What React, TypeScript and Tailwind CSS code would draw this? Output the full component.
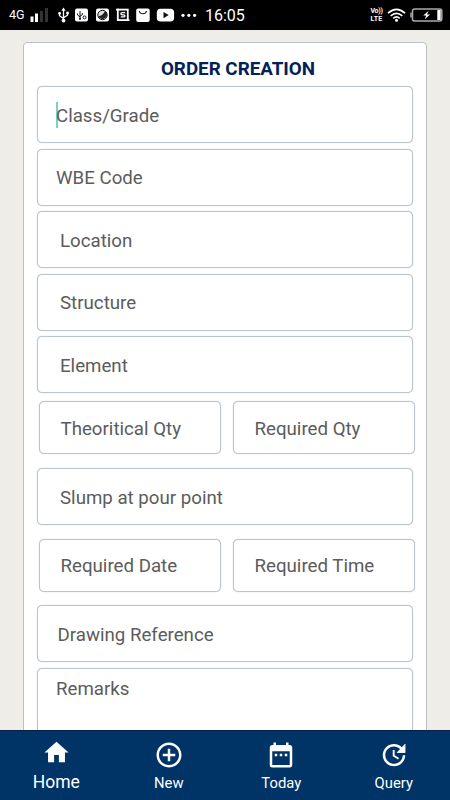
import type { ReactNode } from "react";
import clsx from "clsx";
import { MdControlPoint, MdDateRange, MdHome } from "react-icons/md";

interface FieldProps {
  label: string;
  className?: string;
  focused?: boolean;
}

function Field({ label, className, focused }: FieldProps) {
  return (
    <div
      className={clsx(
        "flex items-center rounded-[5px] border-[1.5px] border-[#bcc4cc] bg-white text-[18.7px] text-[#5c5c5c] shadow-[0_0_1px_#b5bdc6]",
        className,
      )}
    >
      {focused && <span className="-mr-[2px] h-[26px] w-[2px] bg-[#7fcfc0]" />}
      <span className="pt-[3px] whitespace-nowrap">{label}</span>
    </div>
  );
}

function SignalIcon() {
  return (
    <svg className="ml-[3px] h-[14px] w-[19px]" viewBox="0 0 19 14">
      <rect x="0.5" y="8.5" width="3" height="5.5" fill="#fff" />
      <rect x="5" y="5.5" width="3" height="8.5" fill="#fff" />
      <rect x="10" y="3" width="3" height="11" fill="#333" />
      <rect x="15" y="0" width="3" height="14" fill="#333" />
    </svg>
  );
}

function StatusIcons() {
  return (
    <svg className="ml-[9px] h-[16px] w-[141px]" viewBox="0 0 141 16">
      {/* usb */}
      <g stroke="#fff" strokeWidth="1.3" fill="none">
        <path d="M5.5 2v11M1.5 6.5v2.2l4 2.8M9.5 5.5v2.7l-4 2.5" />
      </g>
      <path d="M5.5 0.5l2 3.2h-4z" fill="#fff" />
      <circle cx="5.5" cy="13.6" r="1.9" fill="#fff" />
      <circle cx="1.6" cy="6.3" r="1.4" fill="#fff" />
      <rect x="8.3" y="4.7" width="2.5" height="2.5" fill="#fff" />
      {/* usb debugging */}
      <rect x="17" y="1.5" width="13" height="13" rx="2" fill="#fff" />
      <path d="M22 4v8M19.6 6.5v1.6l2.4 1.8M24.3 6v1.7L22 9.3" stroke="#111" strokeWidth="1" fill="none" />
      <circle cx="22" cy="11.8" r="1.1" fill="#111" />
      <circle cx="26.5" cy="10.4" r="1.5" stroke="#111" strokeWidth="1" fill="none" />
      {/* browser */}
      <rect x="38" y="1.5" width="13" height="13" rx="2" fill="#fff" />
      <circle cx="44.5" cy="8" r="4.7" stroke="#111" strokeWidth="1" fill="#ddd" />
      <path d="M40.3 9.3q4.5-.3 6.7-5.2l2 2.5a4.7 4.7 0 0 1-8.7 3z" fill="#222" />
      {/* scanner */}
      <rect x="59.8" y="2.6" width="10" height="10.5" stroke="#fff" strokeWidth="1.8" fill="#111" />
      <path d="M58 2.6h3M68.5 13.1h3" stroke="#fff" strokeWidth="1.8" />
      <path d="M67.1 5.7h-2.8q-1.4 0-1.4 1t1.2 1.1h1.6q1.2.1 1.2 1.1t-1.4 1h-2.7" stroke="#fff" strokeWidth="1.3" fill="none" />
      {/* shop */}
      <rect x="78.2" y="1.5" width="13.5" height="13.5" rx="2" fill="#fff" />
      <path d="M81.3 4q.5 2.8 3.6 2.8T88.5 4" stroke="#222" strokeWidth="1.1" fill="none" />
      {/* video */}
      <rect x="98.8" y="1.8" width="17.3" height="12.7" rx="3.8" fill="#fff" />
      <path d="M105.5 5v6.2l5.2-3.1z" fill="#111" />
      {/* more */}
      <circle cx="125" cy="8.3" r="1.6" fill="#fff" />
      <circle cx="130.8" cy="8.3" r="1.6" fill="#fff" />
      <circle cx="136.6" cy="8.3" r="1.6" fill="#fff" />
    </svg>
  );
}

function WifiIcon() {
  return (
    <svg className="ml-[3px] h-[14px] w-[19px]" viewBox="0 0 19 14">
      <g stroke="#fff" strokeWidth="1.7" fill="none">
        <path d="M1 5.2Q9.5-2.6 18 5.2" />
        <path d="M3.7 7.8q5.8-5 11.6 0" />
        <path d="M6.3 10.3q3.2-2.7 6.4 0" />
      </g>
      <circle cx="9.5" cy="12.2" r="1.5" fill="#fff" />
    </svg>
  );
}

function BatteryIcon() {
  return (
    <svg className="ml-[4px] h-[14px] w-[33px]" viewBox="0 0 33 14">
      <path d="M1 4.5v5" stroke="#aaa" strokeWidth="1.5" />
      <rect x="2.5" y="0.9" width="29.3" height="12.2" rx="2" stroke="#aaa" strokeWidth="1.5" fill="#000" />
      <rect x="27.3" y="2" width="3.4" height="10" fill="#fff" />
      <path d="M18.5 3l-5.3 4.6h3l-1.5 3.7 5.4-4.9h-3.1z" fill="#fff" />
    </svg>
  );
}

function UpdateIcon() {
  return (
    <svg className="h-[30px] w-[30px]" viewBox="0 0 24 24" fill="currentColor">
      <path d="M21 10.12h-6.78l2.74-2.82c-2.73-2.7-7.15-2.8-9.88-.1-2.73 2.71-2.73 7.08 0 9.79s7.15 2.71 9.88 0C18.32 15.65 19 14.08 19 12.1h2c0 1.98-.88 4.55-2.64 6.29-3.51 3.48-9.21 3.48-12.72 0-3.5-3.47-3.53-9.11-.02-12.58s9.14-3.47 12.65 0L21 3v7.12zM12.5 8v4.25l3.5 2.08-.72 1.21L11 13V8h1.5z" />
      <path d="M21 3v7.12h-6.78z" />
    </svg>
  );
}

function StatusBar() {
  return (
    <header className="flex h-[30px] shrink-0 items-center bg-black text-white">
      <span className="ml-[9px] w-[18px] pt-[1px] text-[12.5px] leading-none">4G</span>
      <SignalIcon />
      <StatusIcons />
      <span className="ml-[6px] pt-[2px] text-[16px] leading-none">16:05</span>
      <div className="mr-[7px] ml-auto flex items-center">
        <div className="flex w-[15px] flex-col items-center text-[7px] leading-[8px] font-bold">
          <span className="h-[8px] tracking-[-0.3px]">Vo))</span>
          <span className="h-[8px] tracking-[0.3px]">LTE</span>
        </div>
        <WifiIcon />
        <BatteryIcon />
      </div>
    </header>
  );
}

interface NavItemProps {
  icon: ReactNode;
  label: string;
  active?: boolean;
}

function NavItem({ icon, label, active }: NavItemProps) {
  return (
    <button className="flex flex-1 flex-col items-center text-white">
      <span className={clsx("flex h-[30px] items-center", active ? "mt-[6px]" : "mt-[9px]")}>{icon}</span>
      <span className={clsx("leading-[20px]", active ? "mt-[5px] text-[17.5px]" : "mt-[3px] text-[14.8px]")}>
        {label}
      </span>
    </button>
  );
}

export default function App() {
  return (
    <div className="flex h-[800px] w-[450px] flex-col overflow-hidden bg-[#eeede8] font-[Roboto,sans-serif]">
      <StatusBar />

      <main className="min-h-0 flex-1 overflow-hidden px-[23px] pt-[12px]">
        <div className="h-[760px] rounded-[4px] border border-[#b9bfc6] bg-white px-[13px]">
          <h1 className="mt-[13px] h-[30px] pl-[26px] text-center text-[18.8px] leading-[26px] font-bold text-[#022257]">
            ORDER CREATION
          </h1>

          <div className="flex flex-col gap-[5.5px]">
            <Field label="Class/Grade" className="h-[57px] pl-[18px]" focused />
            <Field label="WBE Code" className="h-[57px] pl-[18px]" />
            <Field label="Location" className="h-[57px] pl-[22px]" />
            <Field label="Structure" className="h-[57px] pl-[22px]" />
            <Field label="Element" className="h-[57px] pl-[22px]" />
          </div>

          <div className="mt-[8px] -mr-[2px] ml-[2px] flex gap-[12px]">
            <Field label="Theoritical Qty" className="h-[53px] flex-1 pl-[20.5px]" />
            <Field label="Required Qty" className="h-[53px] flex-1 pl-[20.5px]" />
          </div>

          <Field label="Slump at pour point" className="mt-[14px] h-[57px] pl-[22px]" />

          <div className="mt-[13.5px] -mr-[2px] ml-[2px] flex gap-[12px]">
            <Field label="Required Date" className="h-[53px] flex-1 pl-[20.5px]" />
            <Field label="Required Time" className="h-[53px] flex-1 pl-[20.5px]" />
          </div>

          <Field label="Drawing Reference" className="mt-[13.5px] h-[57px] pl-[19.5px]" />
          <Field label="Remarks" className="mt-[6px] h-[90px] items-start pt-[3px] pl-[18px]" />
        </div>
      </main>

      <nav className="flex h-[70px] shrink-0 border-t border-[#02204a] bg-[#003366]">
        <NavItem icon={<MdHome size={29} />} label="Home" active />
        <NavItem icon={<MdControlPoint size={30} />} label="New" />
        <NavItem icon={<MdDateRange size={30} />} label="Today" />
        <NavItem icon={<UpdateIcon />} label="Query" />
      </nav>
    </div>
  );
}
